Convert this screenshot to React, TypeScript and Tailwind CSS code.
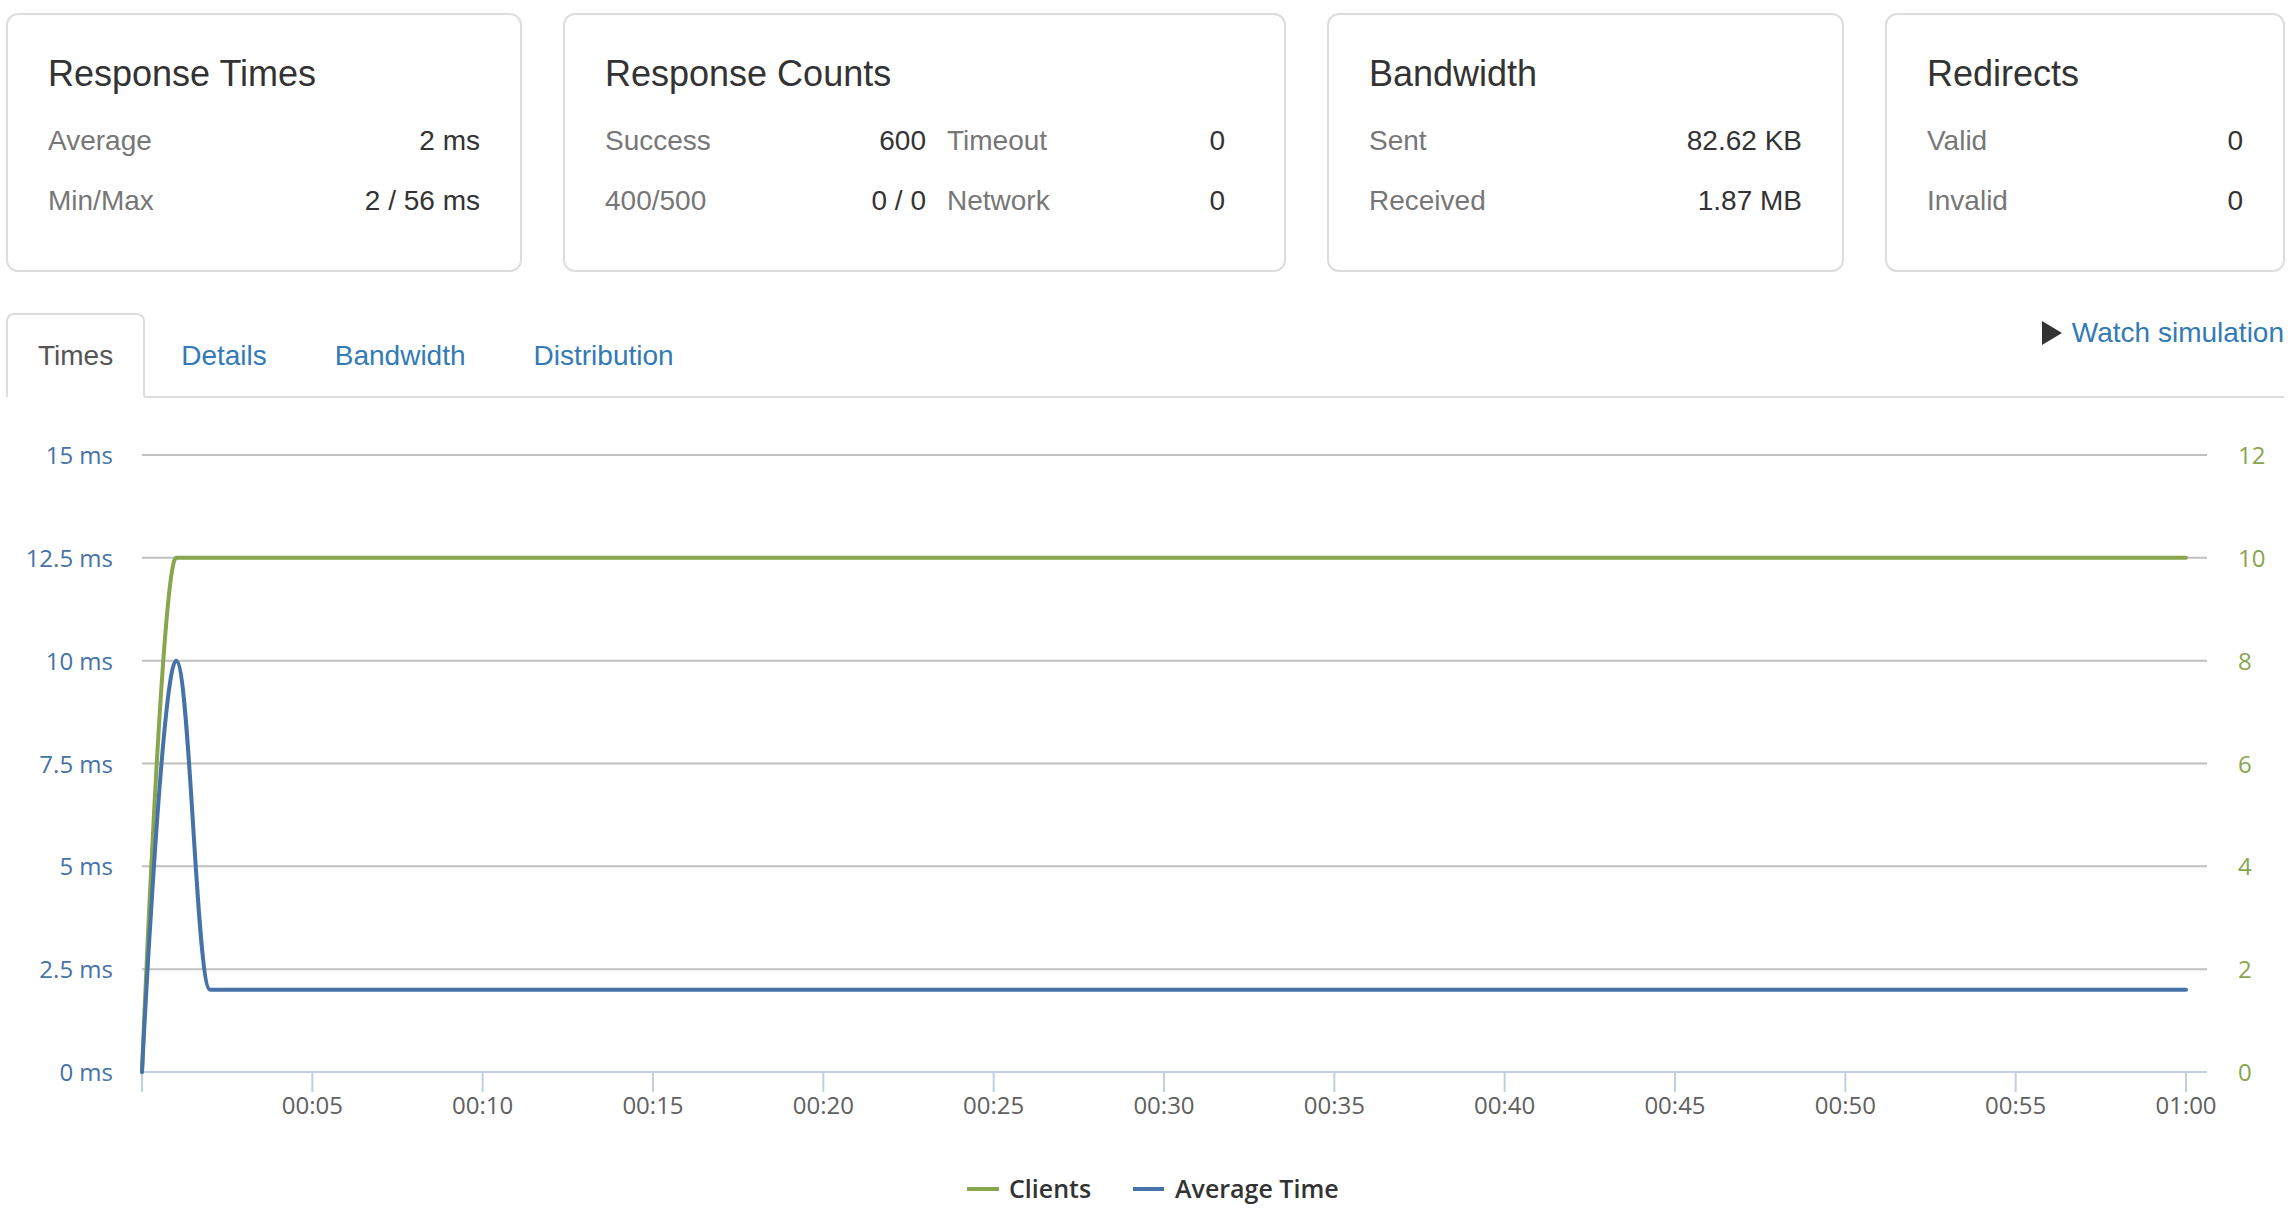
import React from 'react';

type Pt = { x: number; y: number };

// Highcharts-like spline path through the points
const splinePath = (pts: Pt[]) => {
  const s = 1.5;
  const ctrl = pts.map((p, i) => {
    const prev = pts[i - 1];
    const next = pts[i + 1];
    if (!prev || !next) return { lx: p.x, ly: p.y, rx: p.x, ry: p.y };
    let lx = (s * p.x + prev.x) / (s + 1);
    let ly = (s * p.y + prev.y) / (s + 1);
    let rx = (s * p.x + next.x) / (s + 1);
    let ry = (s * p.y + next.y) / (s + 1);
    const corr = ((ry - ly) * (rx - p.x)) / (rx - lx) + p.y - ry;
    ly += corr;
    ry += corr;
    if (ly > prev.y && ly > p.y) { ly = Math.max(prev.y, p.y); ry = 2 * p.y - ly; }
    else if (ly < prev.y && ly < p.y) { ly = Math.min(prev.y, p.y); ry = 2 * p.y - ly; }
    if (ry > next.y && ry > p.y) { ry = Math.max(next.y, p.y); ly = 2 * p.y - ry; }
    else if (ry < next.y && ry < p.y) { ry = Math.min(next.y, p.y); ly = 2 * p.y - ry; }
    return { lx, ly, rx, ry };
  });
  let d = `M ${pts[0].x} ${pts[0].y}`;
  for (let i = 1; i < pts.length; i++) {
    d += ` C ${ctrl[i - 1].rx.toFixed(2)} ${ctrl[i - 1].ry.toFixed(2)} ${ctrl[i].lx.toFixed(2)} ${ctrl[i].ly.toFixed(2)} ${pts[i].x.toFixed(2)} ${pts[i].y.toFixed(2)}`;
  }
  return d;
};

const X0 = 142;
const XS = (2186 - 142) / 60;
const Y0 = 674;
const PLOT_H = 617;
const tx = (t: number) => X0 + t * XS;
const yMs = (v: number) => Y0 - (v * PLOT_H) / 15;
const yClients = (v: number) => Y0 - (v * PLOT_H) / 12;

const seconds = Array.from({ length: 61 }, (_, i) => i);
const avgTime = seconds.map((t) => (t === 0 ? 0 : t === 1 ? 10 : 2));
const clients = seconds.map((t) => (t === 0 ? 0 : 10));

const leftLabels = ['0 ms', '2.5 ms', '5 ms', '7.5 ms', '10 ms', '12.5 ms', '15 ms'];
const rightLabels = ['0', '2', '4', '6', '8', '10', '12'];
const xLabels = ['00:05', '00:10', '00:15', '00:20', '00:25', '00:30', '00:35', '00:40', '00:45', '00:50', '00:55', '01:00'];

const Row = ({ label, value }: { label: string; value: string }) => (
  <div className="flex h-[60px] items-center justify-between">
    <span className="text-[#777]">{label}</span>
    <span className="text-[#333]">{value}</span>
  </div>
);

const Card = ({ title, width, children }: { title: string; width: string; children: React.ReactNode }) => (
  <div className={`${width} h-[259px] shrink-0 rounded-[12px] border-2 border-[#ddd] px-[40px] pt-[39px]`}>
    <h3 className="h-[40px] text-[36px] leading-[40px] text-[#333]">{title}</h3>
    <div className="mt-[17px]">{children}</div>
  </div>
);

const Chart = () => {
  const grid = [0, 1, 2, 3, 4, 5, 6].map((k) => Y0 - (k * PLOT_H) / 6);
  return (
    <svg width={2294} height={810} className="block" style={{ fontFamily: '"Open Sans", sans-serif' }}>
      {grid.slice(1).map((y) => (
        <line key={y} x1={142} x2={2207} y1={y} y2={y} stroke="#c0c0c0" strokeWidth={2} />
      ))}
      {/* x axis */}
      <line x1={142} x2={2207} y1={Y0} y2={Y0} stroke="#c0d0e0" strokeWidth={2} />
      {[0, ...xLabels.map((_, i) => (i + 1) * 5)].map((t) => (
        <line key={t} x1={tx(t)} x2={tx(t)} y1={Y0} y2={Y0 + 20} stroke="#c0d0e0" strokeWidth={2} />
      ))}
      {xLabels.map((l, i) => (
        <text key={l} x={tx((i + 1) * 5)} y={716} textAnchor="middle" fontSize={24} fill="#606060">
          {l}
        </text>
      ))}
      {leftLabels.map((l, i) => (
        <text key={l} x={113} y={grid[i] + 9} textAnchor="end" fontSize={24} fill="#4572a7">
          {l}
        </text>
      ))}
      {rightLabels.map((l, i) => (
        <text key={l} x={2238} y={grid[i] + 9} fontSize={24} fill="#89a54e">
          {l}
        </text>
      ))}
      <path
        d={splinePath(seconds.map((t) => ({ x: tx(t), y: yClients(clients[t]) })))}
        fill="none"
        stroke="#89a54e"
        strokeWidth={4}
        strokeLinejoin="round"
        strokeLinecap="round"
      />
      <path
        d={splinePath(seconds.map((t) => ({ x: tx(t), y: yMs(avgTime[t]) })))}
        fill="none"
        stroke="#4572a7"
        strokeWidth={4}
        strokeLinejoin="round"
        strokeLinecap="round"
      />
      {/* legend */}
      <line x1={967} x2={999} y1={791} y2={791} stroke="#89a54e" strokeWidth={4} />
      <text x={1009} y={800} fontSize={25} fontWeight={600} fill="#333">
        Clients
      </text>
      <line x1={1133} x2={1164} y1={791} y2={791} stroke="#4572a7" strokeWidth={4} />
      <text x={1175} y={800} fontSize={25} fontWeight={600} fill="#333">
        Average Time
      </text>
    </svg>
  );
};

export default function App() {
  return (
    <div className="h-[1208px] w-[2294px] overflow-hidden bg-white font-['Liberation_Sans',Arial,sans-serif] text-[28px] leading-none text-[#333]">
      <div className="pl-[6px] pr-[10px] pt-[13px]">
        {/* summary cards */}
        <div className="flex gap-[41px]">
          <Card title="Response Times" width="w-[516px]">
            <Row label="Average" value="2 ms" />
            <Row label="Min/Max" value="2 / 56 ms" />
          </Card>
          <Card title="Response Counts" width="w-[723px]">
            <div className="grid grid-cols-[321px_278px] gap-x-[21px]">
              <Row label="Success" value="600" />
              <Row label="Timeout" value="0" />
              <Row label="400/500" value="0 / 0" />
              <Row label="Network" value="0" />
            </div>
          </Card>
          <Card title="Bandwidth" width="w-[517px]">
            <Row label="Sent" value="82.62 KB" />
            <Row label="Received" value="1.87 MB" />
          </Card>
          <Card title="Redirects" width="w-[400px]">
            <Row label="Valid" value="0" />
            <Row label="Invalid" value="0" />
          </Card>
        </div>

        {/* tabs */}
        <div className="mt-[41px] flex h-[85px] items-start justify-between border-b-2 border-[#ddd]">
          <ul className="flex gap-[4px]">
            <li className="flex h-[85px] items-center rounded-t-[8px] border-2 border-[#ddd] border-b-white bg-white px-[30px] text-[#555]">
              Times
            </li>
            {['Details', 'Bandwidth', 'Distribution'].map((t) => (
              <li key={t} className="flex h-[85px] items-center border-2 border-transparent px-[30px] text-[#337ab7]">
                {t}
              </li>
            ))}
          </ul>
          <a className="mt-[1px] flex h-[38px] items-center gap-[10px] text-[#337ab7]">
            <svg width="20" height="24" viewBox="0 0 20 24">
              <path d="M0 0 L20 12 L0 24 Z" fill="#333" />
            </svg>
            Watch simulation
          </a>
        </div>
      </div>

      <Chart />
    </div>
  );
}
